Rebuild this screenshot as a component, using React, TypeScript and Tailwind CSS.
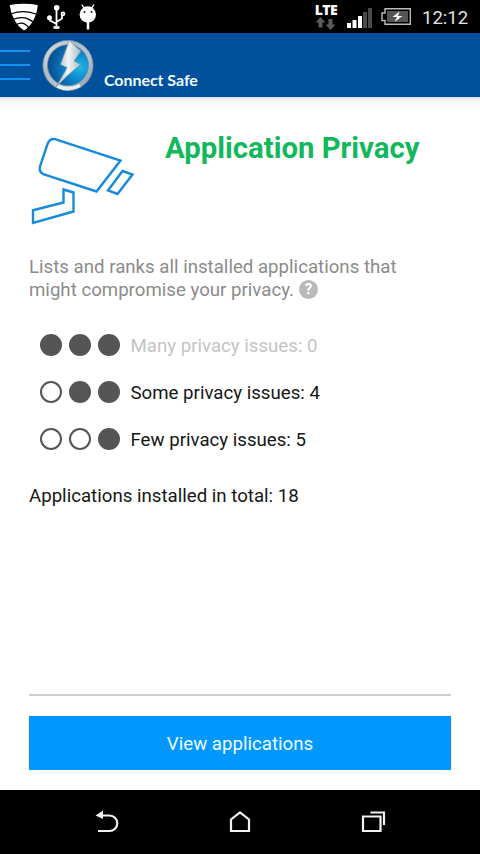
import React from "react";

function StatusBar() {
  return (
    <div className="flex h-[33px] shrink-0 items-start bg-black text-white">
      <svg className="ml-2 h-[33px] w-[32px]" viewBox="8 0 32 33">
        <path d="M9.700 5Q24 2.500 37.800 5Q37 14 33 21Q29 27.500 24 30.500Q18 26.500 14.500 20Q10.500 13 9.700 5Z" fill="#fff" />
        <path d="M10.500 14Q24 9 37.500 14.500M12.500 19.500Q25 14.500 33.500 22.500M16.500 24.500Q23.500 20.500 29 28" fill="none" stroke="#000" strokeWidth="1.300" />
      </svg>
      <svg className="ml-[5px] h-[33px] w-[21px]" viewBox="45 0 21 33" fill="none" stroke="#fff" strokeWidth="1.8">
        <path d="M56.5 26V7M56.5 24L50 20.5V18M56.5 22L62 18.5V15" />
        <circle cx="56.7" cy="7.8" r="1.9" fill="#fff" />
        <circle cx="49.5" cy="17.8" r="1.6" fill="#fff" />
        <circle cx="63" cy="13.8" r="1.5" />
        <path d="M53.5 27.5h6" strokeWidth="2.600" />
      </svg>
      <svg className="ml-[12px] h-[33px] w-[22px]" viewBox="78 0 22 33" fill="none" stroke="#fff">
        <path d="M84.300 8.500L81.800 4.500M91.500 8.500L94 4.500" strokeWidth="1.4" />
        <ellipse cx="87.8" cy="14.500" rx="8.2" ry="8.2" fill="#fff" stroke="none" />
        <path d="M88 21v8.5" strokeWidth="2.5" />
        <circle cx="84.5" cy="12" r="1" fill="#111" stroke="none" />
        <circle cx="91.5" cy="12" r="1" fill="#111" stroke="none" />
      </svg>
      <div className="ml-[214px] flex h-[33px] w-[24px] flex-col items-center">
        <span className="mt-[3px] h-[13px] font-['Open_Sans',sans-serif] text-[14px] leading-[14px] font-extrabold tracking-[-0.5px]">LTE</span>
        <svg className="h-[14px] w-[22px]" viewBox="315 16 22 14" fill="#5b5b5b">
          <path d="M320.5 17l5 5.5h-3v5h-4v-5h-3zM330.500 30l-5-5.500h3v-5.500h4v5.500h3z" />
        </svg>
      </div>
      <svg className="ml-[8px] h-[33px] w-[28px]" viewBox="346 0 28 33">
        <path d="M347 23h4v5h-4zM352.500 20h4v8h-4zM358 16h4v12h-4z" fill="#fff" />
        <path d="M363 12h4v16h-4zM368 8h4v20h-4z" fill="#4b4b4b" />
      </svg>
      <svg className="ml-[6px] h-[33px] w-[34px]" viewBox="380 0 34 33">
        <path d="M385 8.700H410.300V24.300H385V20.500H382V13H385Z" fill="none" stroke="#bbb" strokeWidth="1.4" />
        <path d="M387 11h21v11h-21z" fill="#555" />
        <path d="M399.500 11.500L392.500 17h4.500l-2.500 5 8-6h-4.500z" fill="#fff" />
      </svg>
      <span className="ml-[8px] font-['Roboto',sans-serif] text-[18.5px] leading-[36px] text-[#e3e3e3]">12:12</span>
    </div>
  );
}

function Logo() {
  return (
    <svg className="ml-[11px] h-[54px] w-[54px] shrink-0" viewBox="40 38 54 54">
      <defs>
        <linearGradient id="ring" x1="0" y1="0" x2="1" y2="1">
          <stop offset="0" stopColor="#e8edf0" />
          <stop offset=".35" stopColor="#aebac4" />
          <stop offset=".6" stopColor="#b8c4ce" />
          <stop offset="1" stopColor="#879bb0" />
        </linearGradient>
        <radialGradient id="orb" cx=".8" cy=".55" r=".8">
          <stop offset="0" stopColor="#24b5e8" />
          <stop offset=".45" stopColor="#0b83c8" />
          <stop offset="1" stopColor="#064b8d" />
        </radialGradient>
        <linearGradient id="bolt" x1="0" x2="1">
          <stop offset="0" stopColor="#a3b5bf" />
          <stop offset=".5" stopColor="#f1f4f4" />
          <stop offset="1" stopColor="#a5bcc6" />
        </linearGradient>
      </defs>
      <circle cx="67" cy="65.500" r="25.200" fill="url(#ring)" stroke="#637f9d" strokeWidth=".8" />
      <path d="M56 86Q67 91.500 79 85.500" fill="none" stroke="#e7eff4" strokeWidth="3.500" />
      <circle cx="67" cy="65.200" r="20.500" fill="url(#orb)" stroke="#718da6" strokeWidth=".8" />
      <path d="M68.500 40L72 44.500L80 51L73 61L79.500 64.500L66 76L55 87L64 71.500L66 67.500L59.500 64.500Z" fill="url(#bolt)" stroke="#7897ab" strokeWidth=".7" />
    </svg>
  );
}

function Header() {
  return (
    <header className="flex h-[64px] shrink-0 items-center bg-[#00509c]">
      <div className="flex w-[30px] flex-col gap-[12px]">
        <span className="h-[2px] bg-[#1690f0]" />
        <span className="h-[2px] bg-[#1690f0]" />
        <span className="h-[2px] bg-[#1690f0]" />
      </div>
      <Logo />
      <span className="mt-[29px] ml-[9px] font-['Lato',sans-serif] text-[16px] leading-5 font-bold tracking-[-0.05px] text-[#eefaff]">Connect Safe</span>
    </header>
  );
}

function Rating({ filled, label, muted = false }: { filled: number; label: string; muted?: boolean }) {
  return (
    <div className="flex h-[47px] items-center">
      <div className="flex gap-[7px]">
        {[0, 1, 2].map((i) => (
          <span key={i} className={`size-[22px] rounded-full border-2 border-[#555] ${i >= 3 - filled ? "bg-[#555]" : "bg-white"}`} />
        ))}
      </div>
      <span className={`mt-[2px] ml-[10.5px] whitespace-nowrap ${muted ? "text-[#c4c4c4]" : "text-[#161616]"}`}>{label}</span>
    </div>
  );
}

function NavigationBar() {
  return (
    <nav className="flex h-16 shrink-0 items-center justify-between bg-black px-[93px] text-[#f1f1f1]">
      <svg className="size-7" viewBox="93 808 28 28" fill="none" stroke="currentColor" strokeWidth="2.2">
        <path d="M100 815.500h9.500a7.750 7.750 0 0 1 0 15.500H98" />
        <path d="M95.500 815.500l7.500-5v8.500z" fill="currentColor" stroke="none" />
      </svg>
      <svg className="size-7" viewBox="226 808 28 28" fill="none" stroke="currentColor" strokeWidth="2.2">
        <path d="M231 831V819.500L240 812.500L249 819.500V831Z" />
      </svg>
      <svg className="size-7" viewBox="359 808 28 28" fill="none" stroke="currentColor" strokeWidth="2.2">
        <path d="M363 816.500h17.500V831H363zM370.500 812.500h13.500v12.500" />
      </svg>
    </nav>
  );
}

export default function App() {
  return (
    <div className="flex h-[854px] w-[480px] flex-col overflow-hidden bg-white font-['Roboto',sans-serif] text-[18.67px]">
      <StatusBar />
      <Header />
      <div className="h-[14px] shrink-0 bg-linear-to-b from-[#dce3eb] via-[#f8f8f8] via-30% to-white" />
      <main className="flex flex-1 flex-col px-[29px] pt-[20px] pb-[20px]">
        <div className="flex h-[114px]">
          <svg className="h-[100px] w-[106px] shrink-0" viewBox="29 131 106 100" fill="none" stroke="#168bdc" strokeWidth="2.400">
            <path d="M55 139.200L120.500 160.500L96.500 191.500L44 174.500Q38.500 172 40 166.500L47.500 144Q50 138 55 139.200Z" />
            <path d="M122.500 171L132.500 174.500L117.500 194L108 190.500Z" />
            <path d="M63.500 189.500L73.500 192.500V211.500L33 222.800V210.300L63.500 202.500Z" />
          </svg>
          <h1 className="ml-[30px] text-[29.33px] leading-[34px] font-bold whitespace-nowrap text-[#12b85b]">Application Privacy</h1>
        </div>
        <p className="mt-[11px] h-[46px] leading-[23px] whitespace-nowrap text-[#8b8b8b]">
          Lists and ranks all installed applications that<br />
          might compromise your privacy.
          <span className="ml-[5px] inline-flex size-[19px] items-center justify-center rounded-full bg-[#b9b9b9] align-[2px] text-[15px] leading-none font-bold text-white">?</span>
        </p>
        <section className="mt-[19px] ml-[11px]">
          <Rating filled={3} label="Many privacy issues: 0" muted />
          <Rating filled={2} label="Some privacy issues: 4" />
          <Rating filled={1} label="Few privacy issues: 5" />
        </section>
        <p className="mt-[22px] leading-6 text-[#161616]">Applications installed in total: 18</p>
        <div className="mt-auto h-[2px] bg-[#cecece]" />
        <button className="mt-[20px] h-[54px] w-full shrink-0 bg-[#0098ff] pt-[2px] text-[#effaff]">View applications</button>
      </main>
      <NavigationBar />
    </div>
  );
}
